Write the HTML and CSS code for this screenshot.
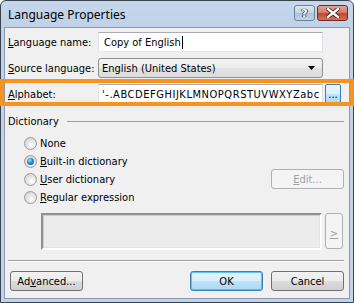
FILE: index.html
```html
<!DOCTYPE html>
<html>
<head>
<meta charset="utf-8">
<link rel="stylesheet" href="styles.css">
</head>
<body>
<div class="window">
  <div class="titlebar">
    <span class="title">Language Properties</span>
    <div class="caption-btns">
      <div class="cbtn help"><span>?</span></div>
      <div class="cbtn close">
        <svg width="14" height="10" viewBox="0 0 14 10">
          <path d="M2 1 L12 9 M12 1 L2 9" stroke="#3a1a18" stroke-width="4" stroke-linecap="square"/>
          <path d="M2 1 L12 9 M12 1 L2 9" stroke="#ffffff" stroke-width="2.4" stroke-linecap="square"/>
        </svg>
      </div>
    </div>
  </div>
  <div class="client">
    <div class="row">
      <span class="label"><u>L</u>anguage name:</span>
      <div class="edit">Copy of English<span class="caret"></span></div>
    </div>
    <div class="row">
      <span class="label"><u>S</u>ource language:</span>
      <div class="combo">
        <span>English (United States)</span>
        <svg class="arrow" width="7" height="4" viewBox="0 0 7 4"><path d="M0 0 H7 L3.5 4 Z" fill="#000"/></svg>
      </div>
    </div>
    <div class="row">
      <span class="label"><u>A</u>lphabet:</span>
      <div class="edit alpha"><span class="alpha-text">'-.ABCDEFGHIJKLMNOPQRSTUVWXYZabc</span></div>
      <div class="dots-btn">...</div>
    </div>

    <div class="group-head"><span>Dictionary</span><div class="line"></div></div>
    <div class="radios">
      <div class="radio-row"><span class="radio"></span><span class="rlabel">None</span></div>
      <div class="radio-row"><span class="radio checked"></span><span class="rlabel"><u>B</u>uilt-in dictionary</span></div>
      <div class="radio-row"><span class="radio"></span><span class="rlabel"><u>U</u>ser dictionary</span><div class="btn disabled edit-btn"><u>E</u>dit...</div></div>
      <div class="radio-row"><span class="radio"></span><span class="rlabel"><u>R</u>egular expression</span></div>
    </div>
    <div class="regex-row">
      <div class="regex-box"></div>
      <div class="btn disabled gt-btn"><u>&gt;</u></div>
    </div>
    <div class="sep"></div>
    <div class="footer">
      <div class="btn adv">Ad<u>v</u>anced...</div>
      <div class="spacer"></div>
      <div class="btn default">OK</div>
      <div class="btn">Cancel</div>
    </div>
  </div>
  <div class="highlight"></div>
</div>
</body>
</html>
```

FILE: styles.css
```css
html, body {
  margin: 0;
  padding: 0;
  background: #ffffff;
}
body {
  width: 354px;
  height: 303px;
  overflow: hidden;
}
.window {
  position: relative;
  width: 354px;
  height: 303px;
  box-sizing: border-box;
  border: 1px solid #3a4450;
  border-radius: 6px 6px 0 0;
  background: linear-gradient(#c6d7ec, #bed1e7 30px, #c2d4e9);
  padding: 0 3px 3px 3px;
  display: flex;
  flex-direction: column;
  font-family: "DejaVu Sans Condensed", "DejaVu Sans", sans-serif;
  font-size: 11px;
  color: #000;
}
.titlebar {
  height: 26px;
  display: flex;
  align-items: center;
  justify-content: space-between;
  flex-shrink: 0;
}
.title {
  font-family: "Noto Sans", "Open Sans", sans-serif;
  font-size: 12px;
  padding-left: 4px;
  color: #000;
  margin-top: 1px;
}
.caption-btns {
  display: flex;
  gap: 2px;
  align-self: flex-start;
  margin-top: 4px;
  margin-right: 2px;
}
.cbtn {
  height: 16px;
  box-sizing: border-box;
  border: 1px solid #6d7f95;
  border-radius: 3px;
  display: flex;
  align-items: center;
  justify-content: center;
}
.help {
  width: 21px;
  background: linear-gradient(#dbe6f3, #c3d3e6 50%, #adc2dc 51%, #c1d4e9);
  font-family: "DejaVu Sans", sans-serif;
  font-weight: bold;
  font-size: 11px;
  color: #ffffff;
  text-shadow: 0 0 1px #3b4a5e, 0 0 1px #3b4a5e, 1px 0 0 #3b4a5e, -1px 0 0 #3b4a5e;
}
.close {
  width: 31px;
  border-color: #6b2a22;
  background: linear-gradient(#e8a396, #d47865 50%, #c4452c 51%, #d5705a);
}
.client {
  flex: 1;
  background: #f0f0f0;
  border: 1px solid #8a9bb1;
  padding: 4px 5px 0 3px;
  display: flex;
  flex-direction: column;
}
.row {
  display: flex;
  align-items: center;
  height: 20px;
  margin-bottom: 6px;
}
.label {
  width: 90px;
  flex-shrink: 0;
}
.edit {
  width: 225px;
  height: 20px;
  box-sizing: border-box;
  border: 1px solid #abadb3;
  border-left-color: #e2e3ea;
  border-right-color: #dbdfe6;
  border-bottom-color: #e3e9ef;
  background: #fff;
  display: flex;
  align-items: center;
  padding-left: 5px;
  overflow: hidden;
  white-space: nowrap;
  flex-shrink: 0;
}
.caret {
  display: inline-block;
  width: 1px;
  height: 13px;
  background: #000;
  margin-left: 1px;
}
.combo {
  width: 225px;
  height: 20px;
  box-sizing: border-box;
  border: 1px solid #8e8f8f;
  border-radius: 3px;
  background: linear-gradient(#f4f4f4, #ececec 50%, #e2e2e2 51%, #dddddd);
  display: flex;
  align-items: center;
  justify-content: space-between;
  padding: 0 7px 0 3px;
}
.alpha {
  padding-left: 3px;
}
.alpha-text {
  letter-spacing: 0.55px;
}
.dots-btn {
  width: 16px;
  height: 20px;
  box-sizing: border-box;
  margin-left: 2px;
  border: 1px solid #3c7fb1;
  border-radius: 2px;
  background: linear-gradient(#eaf6fd, #d9f0fc 50%, #bee6fd 51%, #a7d9f5);
  display: flex;
  align-items: flex-end;
  justify-content: center;
  padding-bottom: 3px;
  line-height: 1;
  font-size: 11px;
  flex-shrink: 0;
}
.highlight {
  position: absolute;
  left: -1px;
  top: 78px;
  width: 354px;
  height: 27px;
  box-sizing: border-box;
  border: 4px solid #f7931e;
}
.group-head {
  display: flex;
  align-items: center;
  height: 14px;
  margin-top: 4px;
}
.group-head .line {
  flex: 1;
  height: 1px;
  background: #a0a0a0;
  margin-left: 8px;
  margin-top: 1px;
}
.radios {
  padding-left: 16px;
  margin-top: 6px;
  display: flex;
  flex-direction: column;
}
.radio-row {
  height: 18px;
  display: flex;
  align-items: center;
}
.radio {
  width: 13px;
  height: 13px;
  box-sizing: border-box;
  border-radius: 50%;
  border: 1px solid #9a9a9a;
  background: radial-gradient(circle at 60% 65%, #ffffff 0%, #e6e6e6 45%, #c8c8c8 100%);
  margin-right: 3px;
  position: relative;
  flex-shrink: 0;
}
.radio.checked::after {
  content: "";
  position: absolute;
  left: 2px;
  top: 2px;
  width: 7px;
  height: 7px;
  border-radius: 50%;
  background: radial-gradient(circle at 40% 35%, #9fdcff 0%, #2a8ad4 45%, #0a4a8a 100%);
}
.rlabel {
  flex: 1;
}
.btn {
  width: 73px;
  height: 20px;
  box-sizing: border-box;
  border: 1px solid #707070;
  border-radius: 3px;
  background: linear-gradient(#f2f2f2, #ebebeb 50%, #dddddd 51%, #cfcfcf);
  display: flex;
  align-items: center;
  justify-content: center;
  flex-shrink: 0;
}
.btn.disabled {
  border-color: #adb2b5;
  background: #f4f4f4;
  color: #a0a0a0;
}
.edit-btn {
  margin: -1px 0;
}
.regex-row {
  display: flex;
  margin-top: 7px;
  padding-left: 33px;
}
.regex-box {
  width: 281px;
  height: 37px;
  box-sizing: border-box;
  border: 2px solid;
  border-color: #8f8f8f #ffffff #ffffff #8f8f8f;
  background: #ececec;
  position: relative;
}
.regex-box::after {
  content: "";
  position: absolute;
  inset: 0;
  border: 1px solid;
  border-color: #cfcfcf #e3e3e3 #e3e3e3 #cfcfcf;
}
.gt-btn {
  width: 18px;
  height: 36px;
  margin-left: 3px;
  align-items: flex-end;
  padding-bottom: 8px;
}
.sep {
  height: 1px;
  background: #a0a0a0;
  border-bottom: 1px solid #ffffff;
  margin-top: 10px;
}
.footer {
  display: flex;
  margin-top: 9px;
  padding-left: 2px;
}
.footer .spacer {
  flex: 1;
}
.btn.adv {
  width: 73px;
}
.btn.default {
  border-color: #3c7fb1;
  background: linear-gradient(#e5f4fc, #d8eefb 50%, #bde4fa 51%, #a7d8f4);
  box-shadow: inset 0 0 0 1px #5ec2f1;
  margin-right: 8px;
}
u {
  text-decoration: underline;
  text-underline-offset: 1px;
}
```
